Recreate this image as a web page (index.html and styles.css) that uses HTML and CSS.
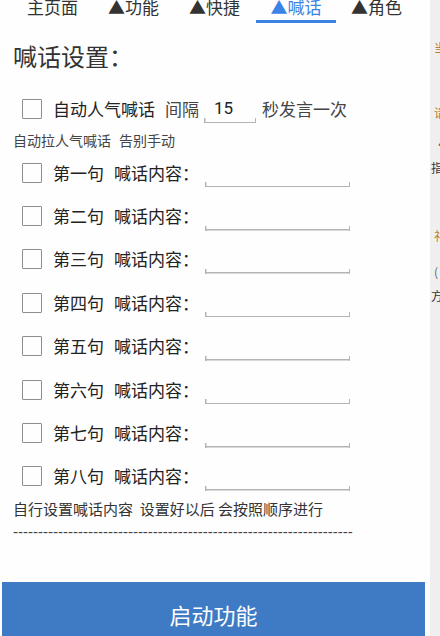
FILE: index.html
```html
<!DOCTYPE html>
<html lang="zh-CN">
<head>
<meta charset="utf-8">
<title>喊话设置</title>
<link rel="stylesheet" href="styles.css">
</head>
<body>
<div class="page">
  <main class="main">
    <nav class="tabs">
      <div class="tab">主页面</div>
      <div class="tab">▲功能</div>
      <div class="tab">▲快捷</div>
      <div class="tab active">▲喊话</div>
      <div class="tab">▲角色</div>
    </nav>
    <h1 class="title">喊话设置：</h1>
    <div class="row">
      <span class="box"></span>
      <span class="label strong">自动人气喊话</span>
      <span class="label soft gap">间隔</span>
      <input class="field short" type="text" value="15">
      <span class="label soft after">秒发言一次</span>
    </div>
    <p class="hint"><span>自动拉人气喊话</span><span class="hint-gap">告别手动</span></p>
    <div class="row"><span class="box"></span><span class="label strong">第一句</span><span class="label strong gap">喊话内容：</span><input class="field long" type="text"></div>
    <div class="row"><span class="box"></span><span class="label strong">第二句</span><span class="label strong gap">喊话内容：</span><input class="field long" type="text"></div>
    <div class="row"><span class="box"></span><span class="label strong">第三句</span><span class="label strong gap">喊话内容：</span><input class="field long" type="text"></div>
    <div class="row"><span class="box"></span><span class="label strong">第四句</span><span class="label strong gap">喊话内容：</span><input class="field long" type="text"></div>
    <div class="row"><span class="box"></span><span class="label strong">第五句</span><span class="label strong gap">喊话内容：</span><input class="field long" type="text"></div>
    <div class="row"><span class="box"></span><span class="label strong">第六句</span><span class="label strong gap">喊话内容：</span><input class="field long" type="text"></div>
    <div class="row"><span class="box"></span><span class="label strong">第七句</span><span class="label strong gap">喊话内容：</span><input class="field long" type="text"></div>
    <div class="row"><span class="box"></span><span class="label strong">第八句</span><span class="label strong gap">喊话内容：</span><input class="field long" type="text"></div>
    <p class="note">自行设置喊话内容&nbsp;&nbsp;设置好以后 会按照顺序进行</p>
    <div class="dashes">--------------------------------------------------------------------------------</div>
    <button class="start" type="button">启动功能</button>
  </main>
  <aside class="side">
    <div class="s s1 warm">当</div>
    <div class="s s2 warm">请</div>
    <div class="s s3 dim">•</div>
    <div class="s s4 dark">指</div>
    <div class="s s5 warm">礼</div>
    <div class="s s6 dim">(</div>
    <div class="s s7 dark">方</div>
  </aside>
</div>
</body>
</html>
```

FILE: styles.css
```css
* { box-sizing: border-box; }

html, body {
  margin: 0;
  padding: 0;
  background: #ffffff;
}

body {
  width: 440px;
  height: 636px;
  overflow: hidden;
  font-family: "Noto Sans CJK SC", "Noto Sans", sans-serif;
  color: #333;
}

.page {
  display: flex;
  width: 440px;
  height: 636px;
}

.main {
  width: 430px;
  flex: none;
  background: #fefefe;
  display: flex;
  flex-direction: column;
}

.main > * { flex: none; }

.tabs {
  display: flex;
  padding-left: 12px;
  margin-top: -4px;
}

.tab {
  width: 81px;
  height: 27px;
  line-height: 22px;
  font-size: 17px;
  text-align: center;
  color: #333;
  border-bottom: 3px solid transparent;
}

.tab.active {
  color: #3b84e6;
  border-bottom-color: #3b84e6;
  width: 80px;
  margin-left: 1px;
}

.title {
  margin: 17px 0 15px 13px;
  font-size: 24px;
  line-height: 32px;
  font-weight: normal;
  color: #333;
}

.row {
  display: flex;
  align-items: center;
  height: 43.4px;
}

.box {
  width: 20px;
  height: 20px;
  margin-left: 22px;
  border: 1.5px solid #8e8e8e;
  border-radius: 1px;
  flex: none;
}

.label {
  font-size: 17px;
  line-height: 22px;
  white-space: nowrap;
}

.box + .label { margin-left: 11px; }

.strong { color: #222; }
.soft { color: #444; }
.gap { margin-left: 10px; }
.after { margin-left: 6px; }

.field {
  height: 28px;
  margin-top: 1px;
  border: none;
  outline: none;
  padding: 0 0 2px 10px;
  font-family: Roboto, "Noto Sans CJK SC", sans-serif;
  font-size: 17px;
  color: #222;
  background:
    linear-gradient(#b4b4b4, #b4b4b4) left bottom / 100% 1.5px no-repeat,
    linear-gradient(#b4b4b4, #b4b4b4) left bottom / 1.5px 5px no-repeat,
    linear-gradient(#b4b4b4, #b4b4b4) right bottom / 1.5px 5px no-repeat;
}

.short { width: 52px; margin-left: 5px; }
.long { width: 145px; margin-left: 6px; }

.hint {
  margin: 0 0 0 13px;
  height: 20.6px;
  line-height: 20.6px;
  font-size: 14px;
  color: #444;
  display: flex;
}

.hint-gap { margin-left: 8px; }

.note {
  margin: 0 0 0 13px;
  line-height: 22px;
  font-size: 15px;
  color: #333;
}

.dashes {
  margin: 2px 0 0 13px;
  width: 340px;
  overflow: hidden;
  white-space: nowrap;
  font-family: "Liberation Sans", sans-serif;
  font-size: 15px;
  line-height: 20px;
  color: #444;
}

.start {
  margin: 40px 0 0 2px;
  width: 423px;
  height: 64px;
  border: none;
  background: #3e7bc4;
  color: #ffffff;
  font-family: "Noto Sans CJK SC", sans-serif;
  font-size: 22px;
  padding: 0;
}

.side {
  width: 10px;
  flex: none;
  background: #efefef;
  overflow: hidden;
  display: flex;
  flex-direction: column;
}

.side > * { flex: none; }

.s {
  font-size: 12px;
  line-height: 14px;
  height: 14px;
  white-space: nowrap;
  padding-left: 4px;
}

.warm { color: #b8802e; }
.dim { color: #666; }
.dark { color: #333; padding-left: 1px; }

.s1 { margin-top: 40.5px; }
.s2 { margin-top: 51.5px; }
.s3 { margin-top: 18px; }
.s4 { margin-top: 9px; }
.s5 { margin-top: 54px; }
.s6 { margin-top: 22px; }
.s7 { margin-top: 10px; }
```
